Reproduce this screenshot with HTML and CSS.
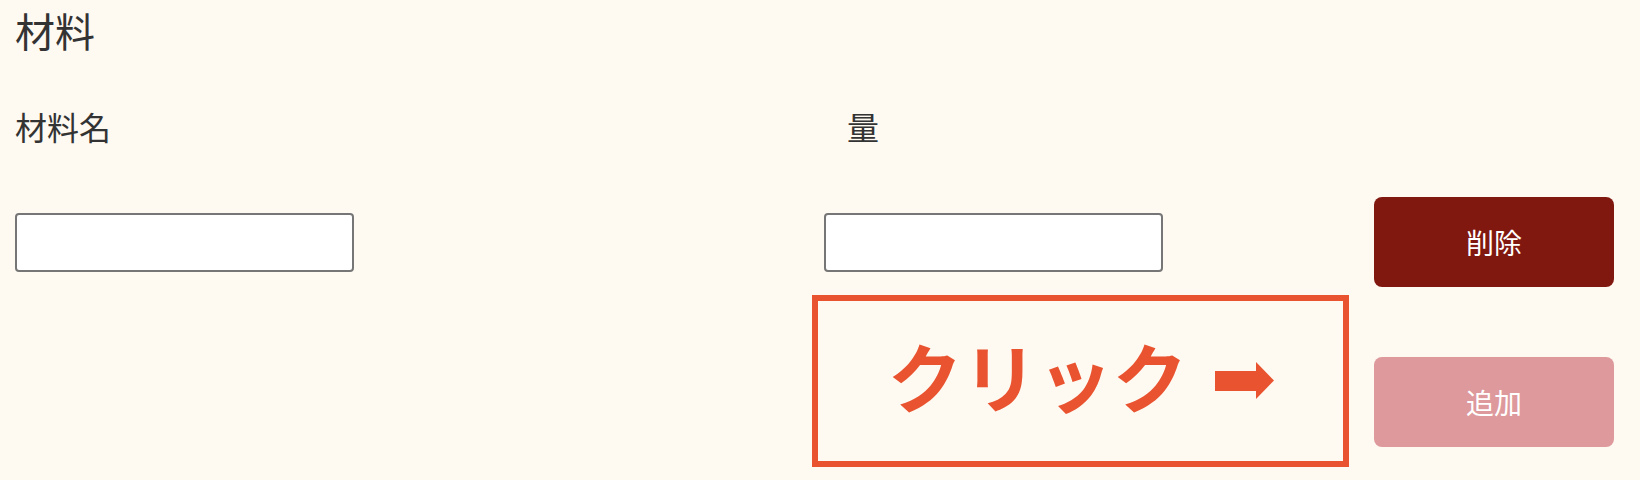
FILE: index.html
```html
<!DOCTYPE html>
<html lang="ja">
<head>
<meta charset="utf-8">
<title>材料</title>
<link rel="stylesheet" href="styles.css">
</head>
<body>
<div class="page">
  <h2 class="title">材料</h2>
  <div class="form">
    <div class="label cell-name-label">材料名</div>
    <div class="label label--amount cell-amount-label">量</div>
    <input class="field cell-name-field" type="text">
    <input class="field cell-amount-field" type="text">
    <button class="btn btn--delete cell-delete" type="button">削除</button>
    <div class="note-cell">
      <div class="note">
        <span class="note-text">クリック</span>
        <svg class="note-arrow" width="59" height="37" viewBox="0 0 59 37"><polygon points="0,9 41,9 41,0 59,18.5 41,37 41,29 0,29" fill="#e9532f"/></svg>
      </div>
    </div>
    <button class="btn btn--add cell-add" type="button">追加</button>
  </div>
</div>
</body>
</html>
```
FILE: styles.css
```css
html, body {
  margin: 0;
  padding: 0;
  background: #fef9f1;
}
body {
  font-family: "Noto Sans CJK JP", "Noto Sans", sans-serif;
  color: #333333;
}
.page {
  box-sizing: border-box;
  min-height: 480px;
  padding: 10px 26px 0 15px;
}
.title {
  margin: 0;
  font-size: 40px;
  line-height: 1;
  font-weight: 400;
}
.form {
  margin-top: 60px;
  display: grid;
  grid-template-columns: 809px 550px 240px;
  grid-template-rows: 32px 55px 90px 70px 90px;
  align-items: center;
}
.cell-name-label { grid-column: 1; grid-row: 1; }
.cell-amount-label { grid-column: 2; grid-row: 1; }
.cell-name-field { grid-column: 1; grid-row: 3; }
.cell-amount-field { grid-column: 2; grid-row: 3; }
.cell-delete { grid-column: 3; grid-row: 3; }
.cell-add { grid-column: 3; grid-row: 5; }
.label {
  font-size: 32px;
  line-height: 1;
}
.label--amount {
  padding-left: 23px;
}
.field {
  box-sizing: border-box;
  width: 339px;
  height: 59px;
  border: 2px solid #767676;
  border-radius: 4px;
  background: #ffffff;
  margin: 0;
  padding: 0 10px;
  font-size: 24px;
}
.btn {
  box-sizing: border-box;
  width: 240px;
  height: 90px;
  border: none;
  border-radius: 8px;
  color: #ffffff;
  font-family: "Noto Sans CJK JP", "Noto Sans", sans-serif;
  font-size: 28px;
  padding: 0;
}
.btn--delete { background: #801810; }
.btn--add { background: #dd999c; }
.note-cell {
  grid-column: 2;
  grid-row: 5;
  position: relative;
  align-self: stretch;
}
.note {
  position: absolute;
  left: -12px;
  top: -62px;
  width: 537px;
  height: 172px;
  box-sizing: border-box;
  border: 6px solid #e9532f;
  display: flex;
  align-items: center;
  justify-content: center;
  gap: 27px;
}
.note-text {
  color: #e9532f;
  font-weight: 700;
  font-size: 75px;
  line-height: 1;
  margin-top: -14px;
}
.note-arrow {
  display: block;
  margin-top: -2px;
}
```
